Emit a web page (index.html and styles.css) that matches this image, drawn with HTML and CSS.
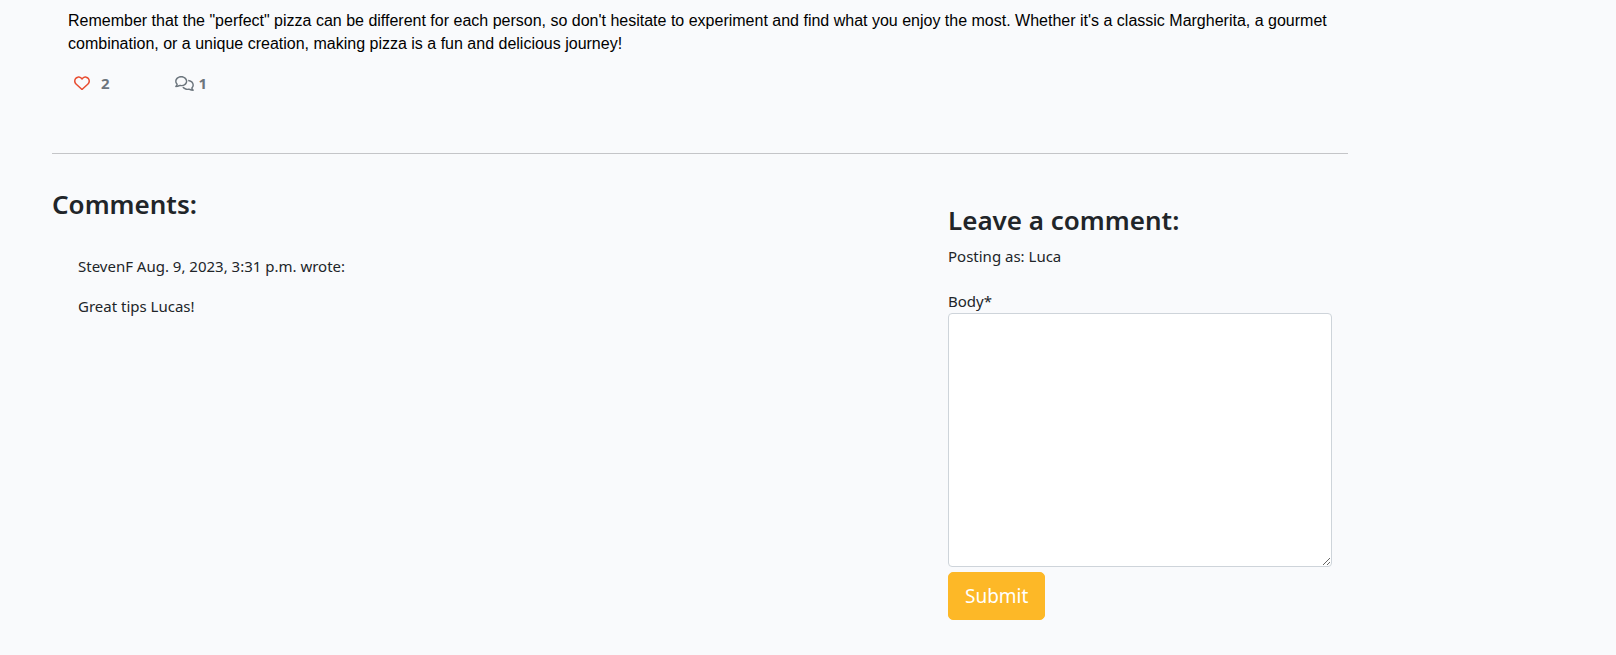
FILE: index.html
```html
<!DOCTYPE html>
<html lang="en">
<head>
<meta charset="utf-8">
<title>Perfect pizza</title>
<link rel="stylesheet" href="styles.css">
</head>
<body>
<main class="page">
  <article class="post">
    <p class="post-text">Remember that the "perfect" pizza can be different for each person, so don't hesitate to experiment and find what you enjoy the most. Whether it's a classic Margherita, a gourmet combination, or a unique creation, making pizza is a fun and delicious journey!</p>
    <div class="stats">
      <button class="like" type="button" aria-label="Like">
        <svg class="heart" viewBox="0 0 512 512" aria-hidden="true"><path fill="currentColor" d="M225.800 468.200l-2.500-2.300L48.100 303.200C17.400 274.700 0 234.700 0 192.800v-3.300c0-70.400 50-130.800 119.200-144C158.600 37.900 198.900 47 231 69.600c9 6.400 17.400 13.800 25 22.300c4.200-4.800 8.700-9.200 13.500-13.300c3.700-3.200 7.500-6.200 11.500-9c0 0 0 0 0 0C313.100 47 353.400 37.900 392.800 45.400C462 58.600 512 119.100 512 189.500v3.300c0 41.900-17.400 81.900-48.100 110.400L288.700 465.900l-2.500 2.300c-8.200 7.600-19 11.900-30.200 11.900s-22-4.200-30.200-11.900zM239.100 145c-.4-.3-.7-.7-1-1.100l-17.800-20c0 0-.1-.1-.1-.1c0 0 0 0 0 0c-23.100-25.900-58-37.700-92-31.200C81.600 101.500 48 142.100 48 189.500v3.300c0 28.500 11.900 55.800 32.800 75.200L256 430.700 431.200 268c20.900-19.400 32.800-46.700 32.800-75.200v-3.300c0-47.300-33.600-88-80.100-96.900c-34-6.500-69 5.400-92 31.200c0 0 0 0-.1 .1s0 0-.1 .1l-17.800 20c-.3 .4-.7 .7-1 1.100c-4.500 4.500-10.600 7-16.900 7s-12.400-2.500-16.900-7z"/></svg>
      </button>
      <span class="like-count">2</span>
      <span class="replies">
        <svg class="bubbles" viewBox="0 0 640 512" aria-hidden="true"><path fill="currentColor" d="M88.200 309.100c9.800-18.300 6.800-40.800-7.500-55.800C59.400 230.900 48 204 48 176c0-63.500 63.800-128 160-128s160 64.500 160 128s-63.800 128-160 128c-13.100 0-25.800-1.300-37.800-3.600c-10.400-2-21.200-.6-30.700 4.200c-4.100 2.100-8.300 4.100-12.600 6c-16 7.200-32.900 13.500-49.900 18c2.800-4.600 5.400-9.100 7.900-13.600c1.100-1.900 2.200-3.900 3.200-5.900zM0 176c0 41.800 17.200 80.100 45.900 110.300c-.9 1.700-1.900 3.500-2.800 5.100c-10.300 18.400-22.300 36.500-36.600 52.100c-6.600 7-8.300 17.200-4.600 25.900C5.800 378.300 14.400 384 24 384c43 0 86.500-13.300 122.700-29.700c4.800-2.200 9.600-4.500 14.200-6.800c15.100 3 30.900 4.500 47.100 4.500c114.900 0 208-78.800 208-176S322.900 0 208 0S0 78.800 0 176zM432 480c16.200 0 31.900-1.600 47.100-4.500c4.600 2.300 9.400 4.600 14.200 6.800C529.500 498.700 573 512 616 512c9.600 0 18.200-5.700 22-14.500c3.800-8.800 2-19-4.600-25.900c-14.200-15.600-26.200-33.700-36.600-52.100c-.9-1.700-1.900-3.400-2.800-5.100C622.800 384.100 640 345.800 640 304c0-94.400-87.900-171.500-198.200-175.800c4.100 15.200 6.200 31.200 6.200 47.800l0 .6c87.200 6.700 144 67.500 144 127.400c0 28-11.400 54.900-32.700 77.200c-14.300 15-17.300 37.600-7.500 55.800c1.100 2 2.200 4 3.200 5.900c2.500 4.500 5.200 9 7.900 13.600c-17-4.500-33.900-10.700-49.900-18c-4.300-1.900-8.500-3.900-12.600-6c-9.500-4.800-20.300-6.200-30.700-4.200c-12.100 2.400-24.700 3.600-37.800 3.600c-61.700 0-110-26.500-136.800-62.300c-16 5.400-32.800 9.400-50 11.800C279 439.800 350 480 432 480z"/></svg>
        1
      </span>
    </div>
  </article>
  <hr class="rule">
  <div class="columns">
    <section class="comments">
      <h3 class="heading">Comments:</h3>
      <div class="comment">
        <p class="comment-meta">StevenF Aug. 9, 2023, 3:31 p.m. wrote:</p>
        <p class="comment-body">Great tips Lucas!</p>
      </div>
    </section>
    <section class="compose">
      <h3 class="heading">Leave a comment:</h3>
      <p class="posting">Posting as: Luca</p>
      <form class="form">
        <label class="label" for="body">Body*</label>
        <textarea class="field" id="body" name="body" rows="10" required></textarea>
        <button class="submit" type="submit">Submit</button>
      </form>
    </section>
  </div>
</main>
</body>
</html>
```
FILE: styles.css
```css
* { box-sizing: border-box; }
body {
  margin: 0;
  background: #f9fafc;
  color: #212529;
  font: 15px/24px "Segoe UI", "Noto Sans", sans-serif;
}
p, h3 { margin: 0; }
.page {
  width: 81%;
  max-width: 1296px;
  margin-left: 52px;
  padding-top: 9px;
}
.post { padding: 0 16px; }
.post-text {
  color: #000;
  font: 16px/23px "Liberation Sans", Arial, sans-serif;
}
.stats {
  display: flex;
  align-items: center;
  margin-top: 16px;
  height: 24px;
  color: #6c757d;
  font-size: 15px;
  font-weight: 700;
}
.like {
  display: flex;
  padding: 0 6px;
  border: 0;
  background: none;
  color: #e84c30;
}
.heart { width: 16px; height: 16px; }
.like-count { margin: 0 65px 0 5px; }
.replies { display: flex; align-items: center; gap: 5px; }
.bubbles { width: 19px; height: 15px; }
.rule {
  margin: 58px 0 33px;
  border: 0;
  border-top: 1px solid #c4c5c8;
}
.columns { display: flex; justify-content: space-between; }
.comments { flex: 1; }
.heading { font-size: 26px; line-height: 34px; font-weight: 600; }
.comment { padding: 33px 26px; }
.comment-body { margin-top: 16px; }
.compose { width: 416px; padding: 16px 16px 0; }
.posting { margin-top: 7px; }
.form { margin-top: 21px; }
.label { display: block; }
.field {
  display: block;
  width: 100%;
  padding: 6px 12px;
  border: 1px solid #ced4da;
  border-radius: 4px;
  background: #fff;
  font-family: inherit;
  font-size: 16px;
  line-height: 24px;
  resize: vertical;
}
.submit {
  margin-top: 5px;
  padding: 8px 16px;
  border: 1px solid #fdb827;
  border-radius: 5px;
  background: #fdb827;
  color: #fff;
  font: 19px/30px "Segoe UI", "Noto Sans", sans-serif;
}
```
